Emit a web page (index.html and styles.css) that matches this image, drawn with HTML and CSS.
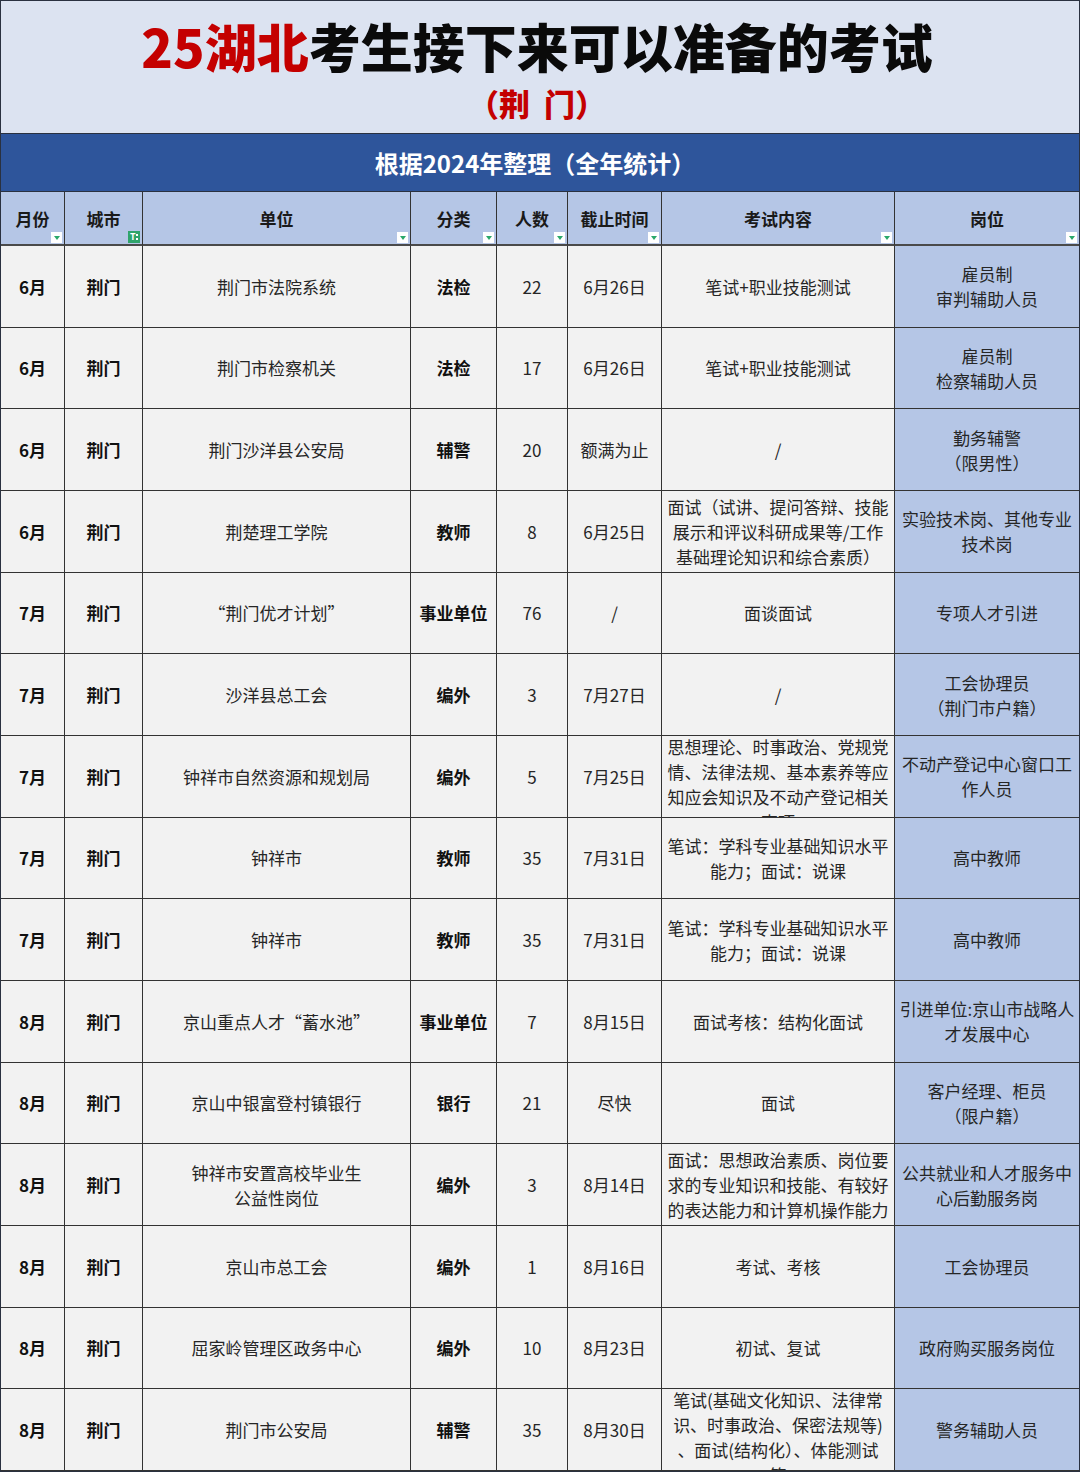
FILE: index.html
```html
<!DOCTYPE html>
<html lang="zh-CN">
<head>
<meta charset="utf-8">
<title>25湖北考生接下来可以准备的考试（荆门）</title>
<link rel="stylesheet" href="styles.css">
</head>
<body>
<div class="sheet">
  <header class="title-block">
    <h1 class="title"><span class="red">25湖北</span>考生接下来可以准备的考试</h1>
    <div class="subtitle">（荆&nbsp;&nbsp;门）</div>
  </header>
  <div class="band">根据2024年整理（全年统计）</div>
  <div class="grid">
    <div class="hd">月份<span class="flt"></span></div>
    <div class="hd">城市<span class="flt on">T<i></i></span></div>
    <div class="hd">单位<span class="flt"></span></div>
    <div class="hd">分类<span class="flt"></span></div>
    <div class="hd">人数<span class="flt"></span></div>
    <div class="hd">截止时间<span class="flt"></span></div>
    <div class="hd">考试内容<span class="flt"></span></div>
    <div class="hd last">岗位<span class="flt"></span></div>

    <div class="c b">6月</div><div class="c b">荆门</div><div class="c">荆门市法院系统</div><div class="c b">法检</div><div class="c">22</div><div class="c">6月26日</div><div class="c">笔试+职业技能测试</div><div class="c pos">雇员制<br>审判辅助人员</div>

    <div class="c b">6月</div><div class="c b">荆门</div><div class="c">荆门市检察机关</div><div class="c b">法检</div><div class="c">17</div><div class="c">6月26日</div><div class="c">笔试+职业技能测试</div><div class="c pos">雇员制<br>检察辅助人员</div>

    <div class="c b">6月</div><div class="c b">荆门</div><div class="c">荆门沙洋县公安局</div><div class="c b">辅警</div><div class="c">20</div><div class="c">额满为止</div><div class="c">/</div><div class="c pos">勤务辅警<br>（限男性）</div>

    <div class="c b">6月</div><div class="c b">荆门</div><div class="c">荆楚理工学院</div><div class="c b">教师</div><div class="c">8</div><div class="c">6月25日</div><div class="c">面试（试讲、提问答辩、技能<br>展示和评议科研成果等/工作<br>基础理论知识和综合素质）</div><div class="c pos">实验技术岗、其他专业<br>技术岗</div>

    <div class="c b">7月</div><div class="c b">荆门</div><div class="c">“荆门优才计划”</div><div class="c b">事业单位</div><div class="c">76</div><div class="c">/</div><div class="c">面谈面试</div><div class="c pos">专项人才引进</div>

    <div class="c b">7月</div><div class="c b">荆门</div><div class="c">沙洋县总工会</div><div class="c b">编外</div><div class="c">3</div><div class="c">7月27日</div><div class="c">/</div><div class="c pos">工会协理员<br>（荆门市户籍）</div>

    <div class="c b">7月</div><div class="c b">荆门</div><div class="c">钟祥市自然资源和规划局</div><div class="c b">编外</div><div class="c">5</div><div class="c">7月25日</div><div class="c top"><span>思想理论、时事政治、党规党<br>情、法律法规、基本素养等应<br>知应会知识及不动产登记相关<br>事项</span></div><div class="c pos">不动产登记中心窗口工<br>作人员</div>

    <div class="c b">7月</div><div class="c b">荆门</div><div class="c">钟祥市</div><div class="c b">教师</div><div class="c">35</div><div class="c">7月31日</div><div class="c">笔试：学科专业基础知识水平<br>能力；面试：说课</div><div class="c pos">高中教师</div>

    <div class="c b">7月</div><div class="c b">荆门</div><div class="c">钟祥市</div><div class="c b">教师</div><div class="c">35</div><div class="c">7月31日</div><div class="c">笔试：学科专业基础知识水平<br>能力；面试：说课</div><div class="c pos">高中教师</div>

    <div class="c b">8月</div><div class="c b">荆门</div><div class="c">京山重点人才“蓄水池”</div><div class="c b">事业单位</div><div class="c">7</div><div class="c">8月15日</div><div class="c">面试考核：结构化面试</div><div class="c pos">引进单位:京山市战略人<br>才发展中心</div>

    <div class="c b">8月</div><div class="c b">荆门</div><div class="c">京山中银富登村镇银行</div><div class="c b">银行</div><div class="c">21</div><div class="c">尽快</div><div class="c">面试</div><div class="c pos">客户经理、柜员<br>（限户籍）</div>

    <div class="c b">8月</div><div class="c b">荆门</div><div class="c">钟祥市安置高校毕业生<br>公益性岗位</div><div class="c b">编外</div><div class="c">3</div><div class="c">8月14日</div><div class="c">面试：思想政治素质、岗位要<br>求的专业知识和技能、有较好<br>的表达能力和计算机操作能力</div><div class="c pos">公共就业和人才服务中<br>心后勤服务岗</div>

    <div class="c b">8月</div><div class="c b">荆门</div><div class="c">京山市总工会</div><div class="c b">编外</div><div class="c">1</div><div class="c">8月16日</div><div class="c">考试、考核</div><div class="c pos">工会协理员</div>

    <div class="c b">8月</div><div class="c b">荆门</div><div class="c">屈家岭管理区政务中心</div><div class="c b">编外</div><div class="c">10</div><div class="c">8月23日</div><div class="c">初试、复试</div><div class="c pos">政府购买服务岗位</div>

    <div class="c b">8月</div><div class="c b">荆门</div><div class="c">荆门市公安局</div><div class="c b">辅警</div><div class="c">35</div><div class="c">8月30日</div><div class="c top"><span>笔试(基础文化知识、法律常<br>识、时事政治、保密法规等)<br>、面试(结构化）、体能测试<br>等</span></div><div class="c pos">警务辅助人员</div>
  </div>
</div>
</body>
</html>
```
FILE: styles.css
```css
* { box-sizing: border-box; }
html, body { margin: 0; padding: 0; }
body {
  width: 1080px;
  height: 1472px;
  overflow: hidden;
  background: #f2f2f2;
  font-family: "Noto Sans CJK SC", "Noto Sans", sans-serif;
  color: #1e1e1e;
}
.sheet {
  width: 1080px;
  height: 1472px;
  display: flex;
  flex-direction: column;
  border: 1px solid #2a3140;
}
.title-block {
  height: 133px;
  background: #dce3f1;
  display: flex;
  flex-direction: column;
  align-items: center;
  border-bottom: 1px solid #2a3140;
}
.title {
  margin: 10px 0 0 0;
  font-size: 52px;
  line-height: 70px;
  font-weight: 900;
  color: #0a0a0a;
  padding-right: 6px;
}
.red { color: #c40000; }
.subtitle {
  margin-top: 2px;
  font-size: 31px;
  line-height: 40px;
  font-weight: 900;
  color: #c40000;
  padding-right: 6px;
}
.band {
  height: 58px;
  background: #2e559b;
  color: #ffffff;
  font-size: 24px;
  font-weight: 700;
  display: flex;
  align-items: center;
  justify-content: center;
  padding-right: 10px;
  border-bottom: 1px solid #2a3140;
}
.grid {
  flex: 1;
  display: grid;
  grid-template-columns: 64px 78px 268px 86px 71px 94px 233px 184px;
  grid-template-rows: 54px repeat(15, 1fr);
  min-height: 0;
}
.hd, .c {
  position: relative;
  display: flex;
  align-items: center;
  justify-content: center;
  text-align: center;
  border-right: 1px solid #333;
  border-bottom: 1px solid #333;
  font-size: 17px;
  line-height: 25px;
  overflow: hidden;
  min-height: 0;
}
.hd {
  background: #b5c6e6;
  font-weight: 700;
  color: #1a1a1a;
  border-bottom: 2px solid #4a4a4a;
}
.grid > :nth-child(8n) { border-right: none; }
.c { background: #f2f2f2; color: #262626; padding: 0 4px; }
.c.b { font-weight: 700; color: #111; }
.c.pos { background: #b5c6e6; }
.c.top { align-items: flex-start; }
.c.top span { display: block; margin-top: -2px; }
.flt {
  position: absolute;
  right: 2px;
  bottom: 1px;
  width: 11px;
  height: 11px;
  background: #ffffff;
}
.flt::after {
  content: "";
  position: absolute;
  left: 3px;
  top: 4px;
  border-left: 3px solid transparent;
  border-right: 3px solid transparent;
  border-top: 4px solid #2aa86a;
}
.flt.on {
  background: #2fa46b;
  color: #ffffff;
  font-size: 9px;
  line-height: 11px;
  font-weight: 700;
  text-align: left;
  padding-left: 2px;
  width: 12px;
  height: 12px;
}
.flt.on::after { display: none; }
.flt.on i {
  position: absolute;
  right: 2px;
  top: 3px;
  width: 2px;
  height: 6px;
  border-top: 2px dotted #fff;
  border-bottom: 2px dotted #fff;
}
```
